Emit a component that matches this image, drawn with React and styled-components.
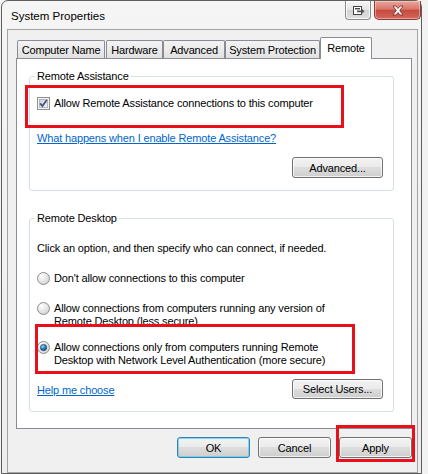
import React from "react";
import styled, { createGlobalStyle } from "styled-components";

const GlobalStyle = createGlobalStyle`
  html, body {
    margin: 0;
    padding: 0;
    background: #f2f2f2;
  }
  body {
    font-family: "Liberation Sans", Arial, sans-serif;
    font-size: 11px;
    letter-spacing: -0.15px;
    color: #000;
  }
`;

const tabs = [
  { label: "Computer Name", w: 88, gap: 1 },
  { label: "Hardware", w: 57, gap: 0 },
  { label: "Advanced", w: 62, gap: 0 },
  { label: "System Protection", w: 95, gap: 0 },
  { label: "Remote", w: 52, gap: 0, active: true },
];

const CheckIcon = () => (
  <svg width="13" height="13" viewBox="0 0 13 13">
    <defs>
      <linearGradient id="cbFill" x1="0" y1="0" x2="1" y2="1">
        <stop offset="0" stopColor="#cbcfd5" />
        <stop offset="1" stopColor="#f4f6f8" />
      </linearGradient>
    </defs>
    <rect x="0.5" y="0.5" width="12" height="12" fill="#f6f6f6" stroke="#8e8f8f" />
    <rect x="2.5" y="2.5" width="8" height="8" fill="url(#cbFill)" stroke="#b4b9c0" />
    <path d="M3.2 6.4 L5.4 9 L9.8 3" stroke="#46558a" strokeWidth="1.8" fill="none" />
  </svg>
);

const RadioIcon = ({ checked }) => (
  <svg width="13" height="13" viewBox="0 0 13 13">
    <defs>
      <radialGradient id="rdFill" cx="0.35" cy="0.3" r="0.8">
        <stop offset="0" stopColor="#ffffff" />
        <stop offset="1" stopColor="#cfcfcf" />
      </radialGradient>
      <radialGradient id="rdDot" cx="0.4" cy="0.35" r="0.7">
        <stop offset="0" stopColor="#9fe0ff" />
        <stop offset="0.45" stopColor="#2a89be" />
        <stop offset="1" stopColor="#0d3a5e" />
      </radialGradient>
    </defs>
    <circle cx="6.5" cy="6.5" r="6" fill="url(#rdFill)" stroke="#8e8f8f" />
    {checked && <circle cx="6.5" cy="6.5" r="3.2" fill="url(#rdDot)" stroke="#1d4d70" strokeWidth="0.5" />}
  </svg>
);

const HelpIcon = () => (
  <svg width="13" height="11" viewBox="0 0 13 11">
    <rect x="1.5" y="1.5" width="8" height="8" fill="#fff" stroke="#444" />
    <rect x="3" y="3" width="5" height="1.4" fill="#444" />
    <path d="M5 5.5 H10 V4 L12.5 6.3 L10 8.6 V7.2 H5 Z" fill="#555" />
  </svg>
);

const CloseIcon = () => (
  <svg width="14" height="11" viewBox="0 0 14 11">
    <path
      d="M2 1 H5 L7 3.5 L9 1 H12 L8.7 5.5 L12 10 H9 L7 7.5 L5 10 H2 L5.3 5.5 Z"
      fill="#fff"
      stroke="#6b2a25"
      strokeWidth="0.8"
    />
  </svg>
);

export default function App() {
  return (
    <>
      <GlobalStyle />
      <Window>
        <TitleBar>
          <Title>System Properties</Title>
          <Controls>
            <HelpButton>
              <HelpIcon />
            </HelpButton>
            <CloseButton>
              <CloseIcon />
            </CloseButton>
          </Controls>
        </TitleBar>
        <Client>
          <TabRow>
            {tabs.map(t => (
              <Tab key={t.label} $w={t.w} $gap={t.gap} $active={t.active}>
                {t.label}
              </Tab>
            ))}
          </TabRow>
          <Panel>
            <Group>
              <Legend>Remote Assistance</Legend>
              <GroupBody $pad="14px 10px 12px 7px">
                <OptionRow>
                  <CheckIcon />
                  <Label>Allow Remote Assistance connections to this computer</Label>
                  <Highlight $l={-12} $t={-12} $w={319} $h={43} />
                </OptionRow>
                <Link href="#" $top={21}>
                  What happens when I enable Remote Assistance?
                </Link>
                <ButtonRow $top={12}>
                  <Button $w={91} $h={21}>Advanced...</Button>
                </ButtonRow>
              </GroupBody>
            </Group>
            <Group>
              <Legend>Remote Desktop</Legend>
              <GroupBody $pad="17px 10px 12px 7px">
                <Label>Click an option, and then specify who can connect, if needed.</Label>
                <OptionRow $top={17}>
                  <RadioIcon />
                  <Label>Don't allow connections to this computer</Label>
                </OptionRow>
                <OptionRow $top={17}>
                  <RadioIcon />
                  <Label>
                    Allow connections from computers running any version of
                    <br />
                    Remote Desktop (less secure)
                  </Label>
                </OptionRow>
                <OptionRow $top={13}>
                  <RadioIcon checked />
                  <Label>
                    Allow connections only from computers running Remote
                    <br />
                    Desktop with Network Level Authentication (more secure)
                  </Label>
                  <Highlight $l={-2} $t={-17} $w={320} $h={50} />
                </OptionRow>
                <FooterRow>
                  <Link href="#" $top={4}>
                    Help me choose
                  </Link>
                  <Button $w={91} $h={20}>Select Users...</Button>
                </FooterRow>
              </GroupBody>
            </Group>
          </Panel>
          <DialogButtons>
            <Button $w={73} $h={21} $primary>
              OK
            </Button>
            <Button $w={73} $h={21}>Cancel</Button>
            <Button $w={73} $h={21}>
              Apply
              <Highlight $l={-4} $t={-13} $w={79} $h={37} />
            </Button>
          </DialogButtons>
        </Client>
      </Window>
    </>
  );
}

const Window = styled.div`
  box-sizing: border-box;
  width: 421px;
  height: 474px;
  margin-left: 1px;
  display: flex;
  flex-direction: column;
  border: 1px solid #5e5e5e;
  border-radius: 7px 7px 0 0;
  background: linear-gradient(#f5f5f5, #ededed);
  padding: 0 3px 0 5px;
`;

const TitleBar = styled.div`
  height: 28px;
  display: flex;
  align-items: flex-start;
`;

const Title = styled.div`
  margin: 8px 0 0 4px;
  font-size: 11.5px;
  line-height: 14px;
  letter-spacing: 0;
`;

const Controls = styled.div`
  margin-left: auto;
  margin-right: -3px;
  display: flex;
  gap: 3px;
`;

const HelpButton = styled.div`
  box-sizing: border-box;
  width: 26px;
  height: 19px;
  border: 1px solid #8c8c8c;
  border-top: none;
  border-radius: 0 0 4px 4px;
  background: linear-gradient(#f6f6f6, #e4e4e4 50%, #d3d3d3 51%, #dedede);
  box-shadow: inset 0 0 0 1px rgba(255, 255, 255, 0.8);
  display: flex;
  align-items: center;
  justify-content: center;
`;

const CloseButton = styled.div`
  box-sizing: border-box;
  width: 47px;
  height: 19px;
  border: 1px solid #8a3b35;
  border-top: none;
  border-radius: 0 0 5px 5px;
  background: linear-gradient(#eba79d, #d9766b 45%, #c84a3f 52%, #d0685c);
  box-shadow: inset 0 0 0 1px rgba(255, 220, 210, 0.5);
  display: flex;
  align-items: center;
  justify-content: center;
`;

const Client = styled.div`
  flex: 1;
  border: 1px solid #a3a3a3;
  background: #f0f0f0;
  padding: 7px 5px 0 8px;
  display: flex;
  flex-direction: column;
`;

const TabRow = styled.div`
  height: 22px;
  margin-bottom: -1px;
  padding-left: 1px;
  display: flex;
  align-items: flex-start;
  position: relative;
  z-index: 1;
`;

const Tab = styled.div`
  box-sizing: border-box;
  width: ${p => p.$w}px;
  height: ${p => (p.$active ? 22 : 18)}px;
  margin-top: ${p => (p.$active ? 0 : 3)}px;
  margin-right: ${p => p.$gap}px;
  padding-bottom: ${p => (p.$active ? 2 : 0)}px;
  border: 1px solid #898c95;
  border-bottom: none;
  border-radius: 2px 2px 0 0;
  background: ${p => (p.$active ? "#ffffff" : "linear-gradient(#f3f3f3, #ebebeb 50%, #e1e1e1)")};
  display: flex;
  align-items: center;
  justify-content: center;
  white-space: nowrap;
`;

const Panel = styled.div`
  box-sizing: border-box;
  width: 396px;
  height: 371px;
  border: 1px solid #898c95;
  background: #fff;
  padding: 10px 17px 0 12px;
  display: flex;
  flex-direction: column;
  gap: 20px;
`;

const Group = styled.fieldset`
  margin: 0;
  padding: 0;
  min-width: 0;
  border: 1px solid #d5dfe5;
  border-radius: 3px;
`;

const Legend = styled.legend`
  margin-left: 5px;
  padding: 0 2px;
  line-height: 14px;
`;

const GroupBody = styled.div`
  padding: ${p => p.$pad};
  display: flex;
  flex-direction: column;
  align-items: stretch;
`;

const OptionRow = styled.div`
  position: relative;
  margin-top: ${p => p.$top || 0}px;
  display: flex;
  align-items: flex-start;
  gap: 4px;
  line-height: 13px;

  svg {
    flex: none;
  }
`;

const Label = styled.div`
  line-height: 13px;
  white-space: nowrap;
`;

const Link = styled.a`
  align-self: flex-start;
  margin-top: ${p => p.$top || 0}px;
  line-height: 14px;
  color: #0066cc;
  text-decoration: underline;
`;

const ButtonRow = styled.div`
  margin-top: ${p => p.$top}px;
  display: flex;
  justify-content: flex-end;
`;

const FooterRow = styled.div`
  margin-top: 12px;
  display: flex;
  justify-content: space-between;
  align-items: flex-start;
`;

const Button = styled.button`
  position: relative;
  box-sizing: border-box;
  width: ${p => p.$w}px;
  height: ${p => p.$h}px;
  padding: 0;
  border: 1px solid ${p => (p.$primary ? "#3c7fb1" : "#707070")};
  border-radius: 3px;
  background: linear-gradient(#f2f2f2, #ebebeb 49%, #dddddd 50%, #cfcfcf);
  box-shadow: inset 0 0 0 1px ${p => (p.$primary ? "rgba(72, 208, 251, 0.7)" : "rgba(255, 255, 255, 0.75)")};
  font: inherit;
  letter-spacing: -0.15px;
  color: #000;
`;

const DialogButtons = styled.div`
  margin-top: 8px;
  display: flex;
  justify-content: flex-end;
  gap: 8px;
`;

const Highlight = styled.div`
  position: absolute;
  left: ${p => p.$l}px;
  top: ${p => p.$t}px;
  width: ${p => p.$w}px;
  height: ${p => p.$h}px;
  box-sizing: border-box;
  border: 3px solid #e8101a;
  pointer-events: none;
`;
